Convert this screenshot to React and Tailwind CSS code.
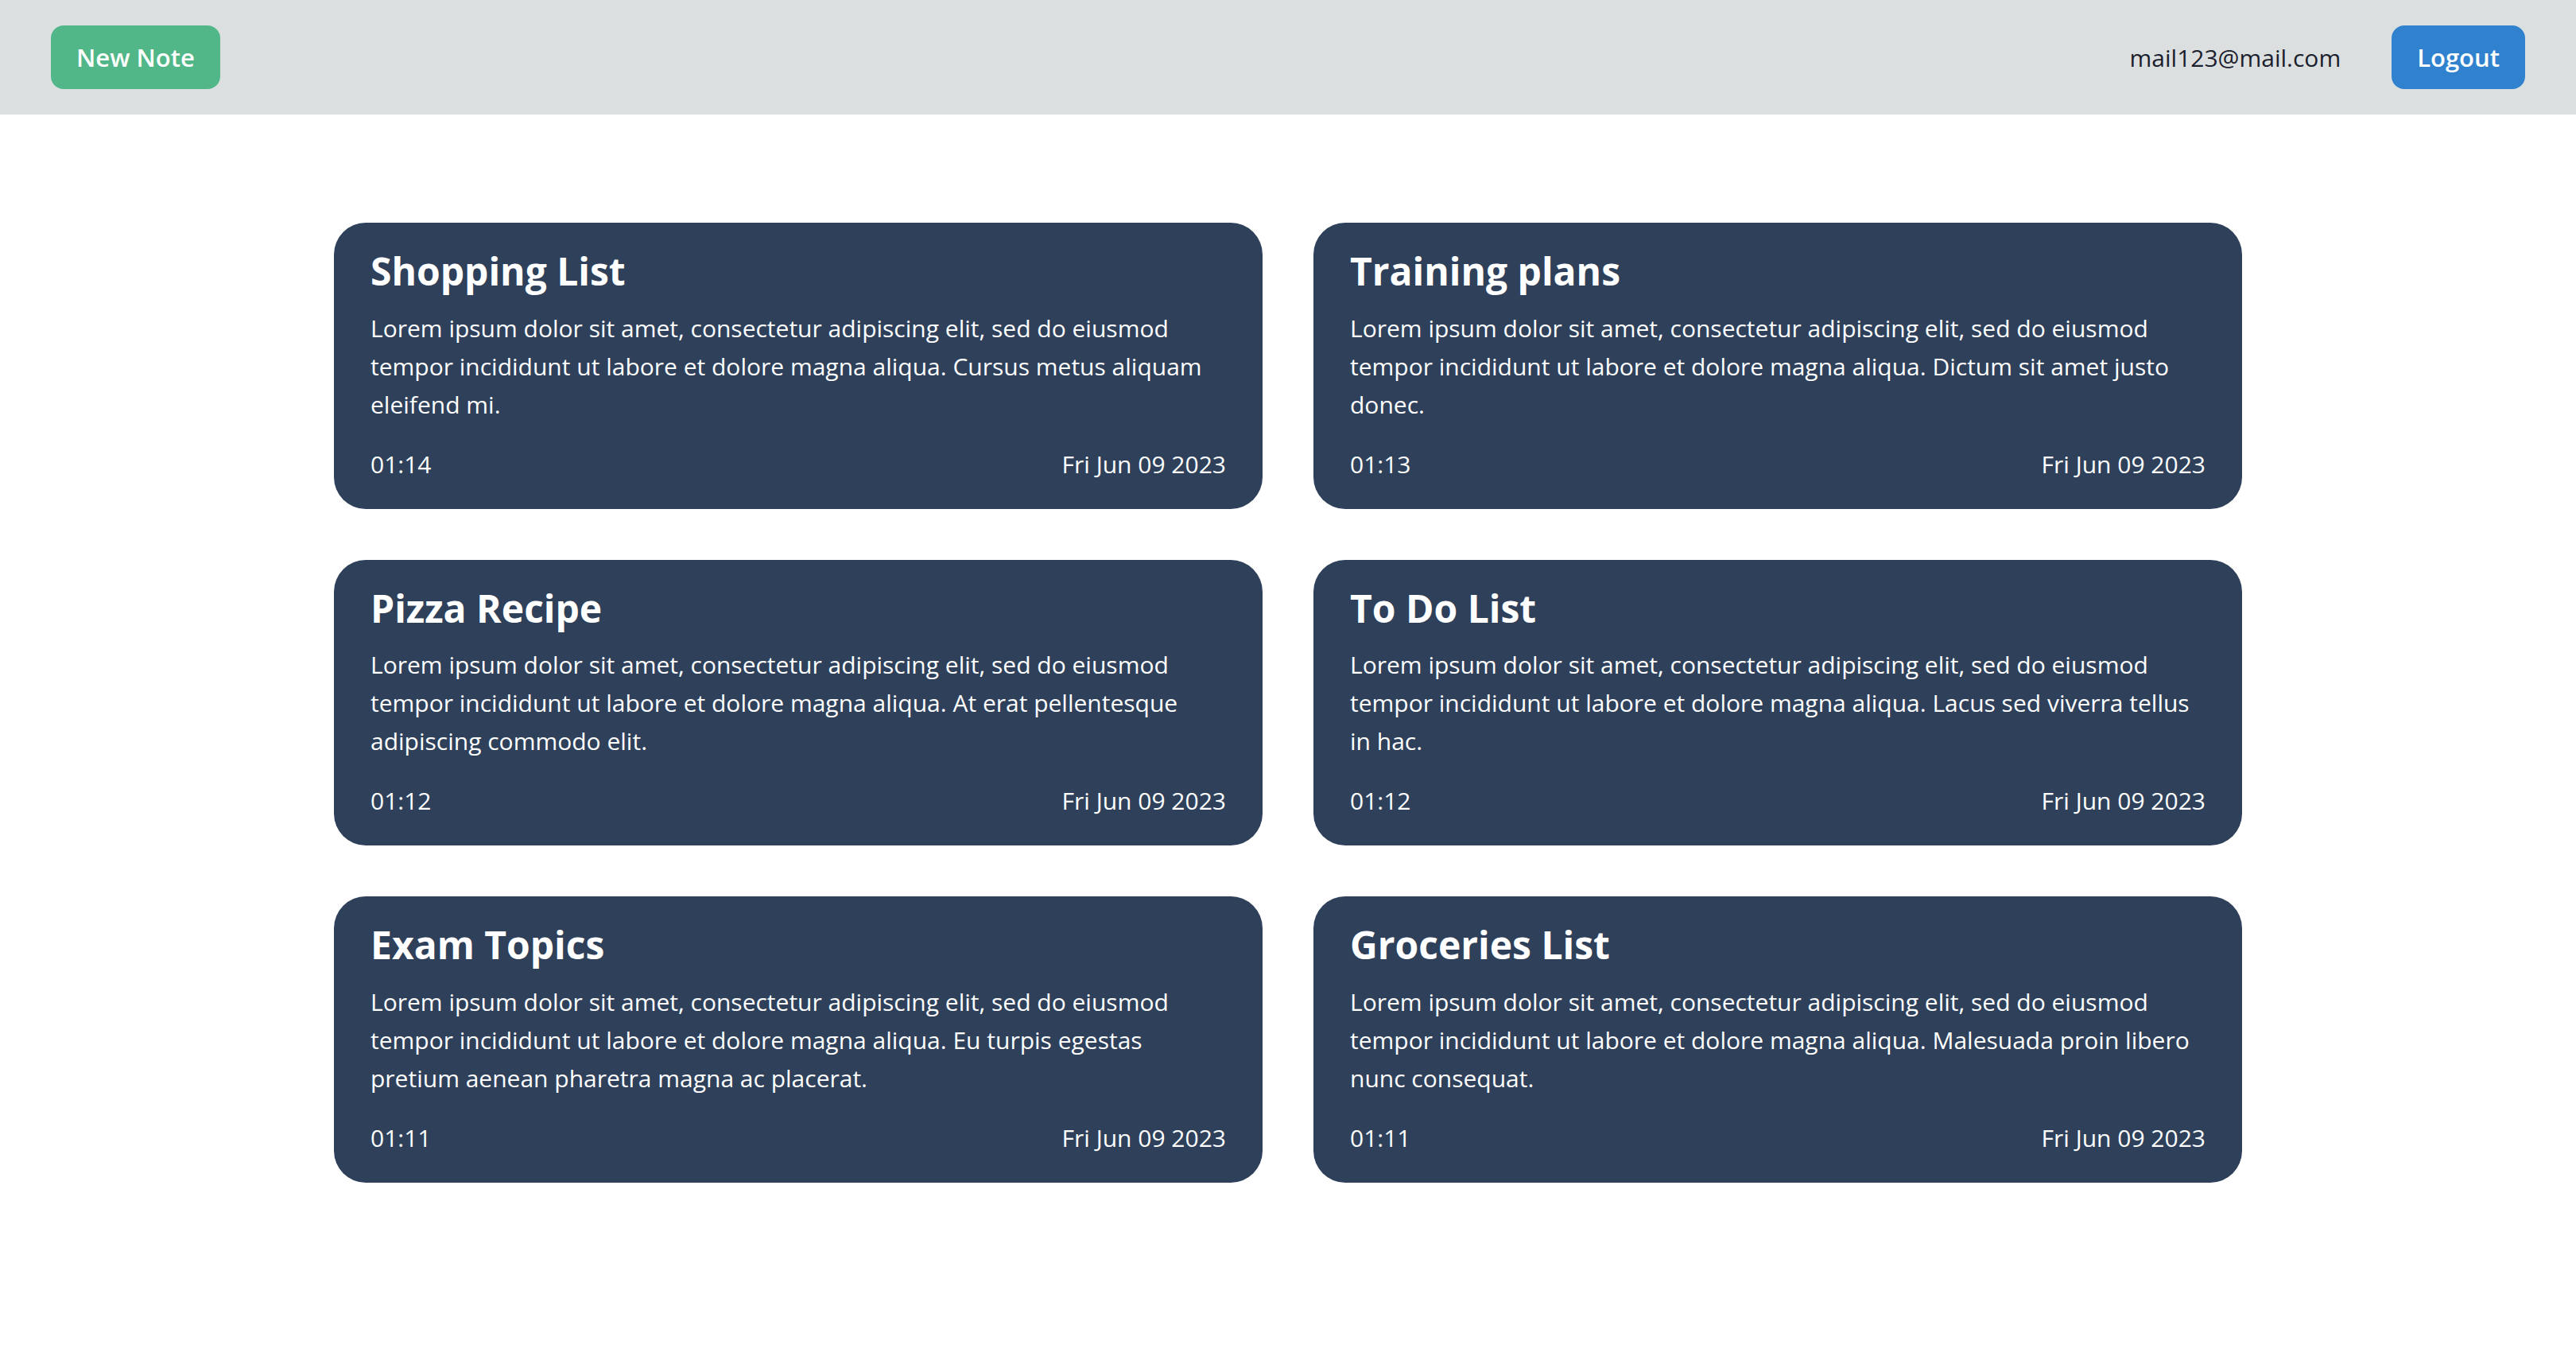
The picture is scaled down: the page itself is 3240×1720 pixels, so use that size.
import React from "react";

const notes = [
  {
    title: "Shopping List",
    body: "Lorem ipsum dolor sit amet, consectetur adipiscing elit, sed do eiusmod tempor incididunt ut labore et dolore magna aliqua. Cursus metus aliquam eleifend mi.",
    time: "01:14",
  },
  {
    title: "Training plans",
    body: "Lorem ipsum dolor sit amet, consectetur adipiscing elit, sed do eiusmod tempor incididunt ut labore et dolore magna aliqua. Dictum sit amet justo donec.",
    time: "01:13",
  },
  {
    title: "Pizza Recipe",
    body: "Lorem ipsum dolor sit amet, consectetur adipiscing elit, sed do eiusmod tempor incididunt ut labore et dolore magna aliqua. At erat pellentesque adipiscing commodo elit.",
    time: "01:12",
  },
  {
    title: "To Do List",
    body: "Lorem ipsum dolor sit amet, consectetur adipiscing elit, sed do eiusmod tempor incididunt ut labore et dolore magna aliqua. Lacus sed viverra tellus in hac.",
    time: "01:12",
  },
  {
    title: "Exam Topics",
    body: "Lorem ipsum dolor sit amet, consectetur adipiscing elit, sed do eiusmod tempor incididunt ut labore et dolore magna aliqua. Eu turpis egestas pretium aenean pharetra magna ac placerat.",
    time: "01:11",
  },
  {
    title: "Groceries List",
    body: "Lorem ipsum dolor sit amet, consectetur adipiscing elit, sed do eiusmod tempor incididunt ut labore et dolore magna aliqua. Malesuada proin libero nunc consequat.",
    time: "01:11",
  },
];

function NoteCard({ note }) {
  return (
    <div className="rounded-[40px] bg-[#2e405a] px-[46px] py-8 text-white">
      <h2 className="text-[48px] font-bold leading-[1.2]">{note.title}</h2>
      <p className="mt-[19px] text-[30px] leading-[48px]">{note.body}</p>
      <div className="mt-[27px] flex justify-between text-[30px] leading-[48px]">
        <span>{note.time}</span>
        <span>Fri Jun 09 2023</span>
      </div>
    </div>
  );
}

export default function App() {
  return (
    <div className="min-h-screen bg-white font-['Open_Sans',sans-serif]">
      {/* top bar */}
      <header className="flex h-[144px] items-center justify-between bg-[#dcdfe0] px-16">
        <button className="h-20 rounded-2xl bg-[#52b788] px-8 text-[31px] font-semibold text-white">
          New Note
        </button>
        <div className="flex items-center gap-16">
          <span className="text-[30px] text-[#1a202c]">mail123@mail.com</span>
          <button className="h-20 rounded-2xl bg-[#3182ce] px-8 text-[31px] font-semibold text-white">
            Logout
          </button>
        </div>
      </header>

      {/* notes */}
      <main className="mx-auto grid w-[2400px] grid-cols-2 gap-16 pt-[136px]">
        {notes.map((n) => (
          <NoteCard key={n.title} note={n} />
        ))}
      </main>
    </div>
  );
}
